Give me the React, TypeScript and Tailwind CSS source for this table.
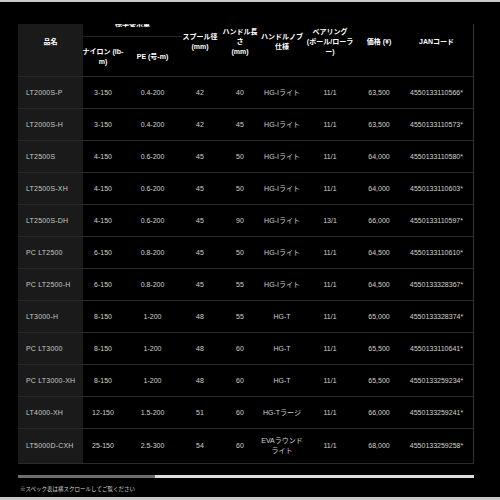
import React from "react";

const rows: string[][] = [
  ["LT2000S-P", "3-150", "0.4-200", "42", "40", "HG-Iライト", "11/1", "63,500", "4550133110566*"],
  ["LT2000S-H", "3-150", "0.4-200", "42", "45", "HG-Iライト", "11/1", "63,500", "4550133110573*"],
  ["LT2500S", "4-150", "0.6-200", "45", "50", "HG-Iライト", "11/1", "64,000", "4550133110580*"],
  ["LT2500S-XH", "4-150", "0.6-200", "45", "50", "HG-Iライト", "11/1", "64,000", "4550133110603*"],
  ["LT2500S-DH", "4-150", "0.6-200", "45", "90", "HG-Iライト", "13/1", "66,000", "4550133110597*"],
  ["PC LT2500", "6-150", "0.8-200", "45", "50", "HG-Iライト", "11/1", "64,500", "4550133110610*"],
  ["PC LT2500-H", "6-150", "0.8-200", "45", "55", "HG-Iライト", "11/1", "64,500", "4550133328367*"],
  ["LT3000-H", "8-150", "1-200", "48", "55", "HG-T", "11/1", "65,000", "4550133328374*"],
  ["PC LT3000", "8-150", "1-200", "48", "60", "HG-T", "11/1", "65,500", "4550133110641*"],
  ["PC LT3000-XH", "8-150", "1-200", "48", "60", "HG-T", "11/1", "65,500", "4550133259234*"],
  ["LT4000-XH", "12-150", "1.5-200", "51", "60", "HG-Tラージ", "11/1", "66,000", "4550133259241*"],
  ["LT5000D-CXH", "25-150", "2.5-300", "54", "60", "EVAラウンド\nライト", "11/1", "68,000", "4550133259258*"],
];

const cols = "grid grid-cols-[65px_40px_59px_36px_44px_40px_56px_42px_1fr]";

function Cell({ text }: { text: string }) {
  const parts = text.split("\n");
  return (
    <div className="flex flex-col items-center justify-center text-center whitespace-nowrap">
      {parts.map((p, i) => (
        <span key={i}>{p}</span>
      ))}
    </div>
  );
}

export default function App() {
  return (
    <div
      className="w-[500px] h-[500px] bg-black flex flex-col overflow-hidden"
      style={{ fontFamily: '"Liberation Sans", "Noto Sans CJK JP", sans-serif' }}
    >
      <div className="h-[2px] bg-[#c8c8c8] shrink-0" />
      <div className="mt-[22px] ml-[18px] w-[456px] overflow-hidden border-r border-[#333333] shrink-0">
        <div className="-mt-[17px]">
          {/* header */}
          <div className={`${cols} grid-rows-[30px_39px] border-b border-[#2a2a2a] text-[7px] leading-[10px] font-bold text-white`}>
            <div className="row-span-2 bg-[#1a1a1a] flex items-center justify-center">品名</div>
            <div className="col-span-2 border-b border-[#262626] flex items-center justify-center pt-[4px]">標準巻糸量</div>
            <div className="row-span-2 flex items-center justify-center text-center">
              スプール径<br />(mm)
            </div>
            <div className="row-span-2 flex items-center justify-center text-center">
              ハンドル長<br />さ<br />(mm)
            </div>
            <div className="row-span-2 flex items-center justify-center text-center whitespace-nowrap">
              ハンドルノブ<br />仕様
            </div>
            <div className="row-span-2 flex items-center justify-center text-center whitespace-nowrap">
              ベアリング<br />(ボール/ローラ<br />ー)
            </div>
            <div className="row-span-2 flex items-center justify-center whitespace-nowrap">価格 (¥)</div>
            <div className="row-span-2 flex items-center justify-center whitespace-nowrap">JANコード</div>
            <div className="flex items-center justify-center text-center whitespace-nowrap">
              ナイロン (lb-<br />m)
            </div>
            <div className="flex items-center justify-center whitespace-nowrap">PE (号-m)</div>
          </div>
          {/* body */}
          {rows.map((r, i) => (
            <div
              key={i}
              className={`${cols} ${i === rows.length - 1 ? "h-[35px]" : "h-[32px]"} border-b border-[#2a2a2a] text-[7px] leading-[10px] text-[#d2d2d2]`}
            >
              <div className="bg-[#1a1a1a] flex items-center pl-[8px] whitespace-nowrap text-[#c8c8c8] tracking-[0.2px]">
                {r[0]}
              </div>
              {r.slice(1).map((c, j) => (
                <Cell key={j} text={c} />
              ))}
            </div>
          ))}
        </div>
      </div>
      <div className="mt-[11px] ml-[18px] w-[456px] h-[3px] flex shrink-0">
        <div className="w-[137px] bg-[#6e6e6e]" />
        <div className="flex-1 bg-[#dedede]" />
      </div>
      <div className="mt-[7px] ml-[20px] text-[5.5px] leading-[8px] text-[#d8d8d8] whitespace-nowrap shrink-0">
        ※スペック表は横スクロールしてご覧ください
      </div>
      <div className="mt-auto h-[3px] bg-[#c8c8c8] shrink-0" />
    </div>
  );
}
